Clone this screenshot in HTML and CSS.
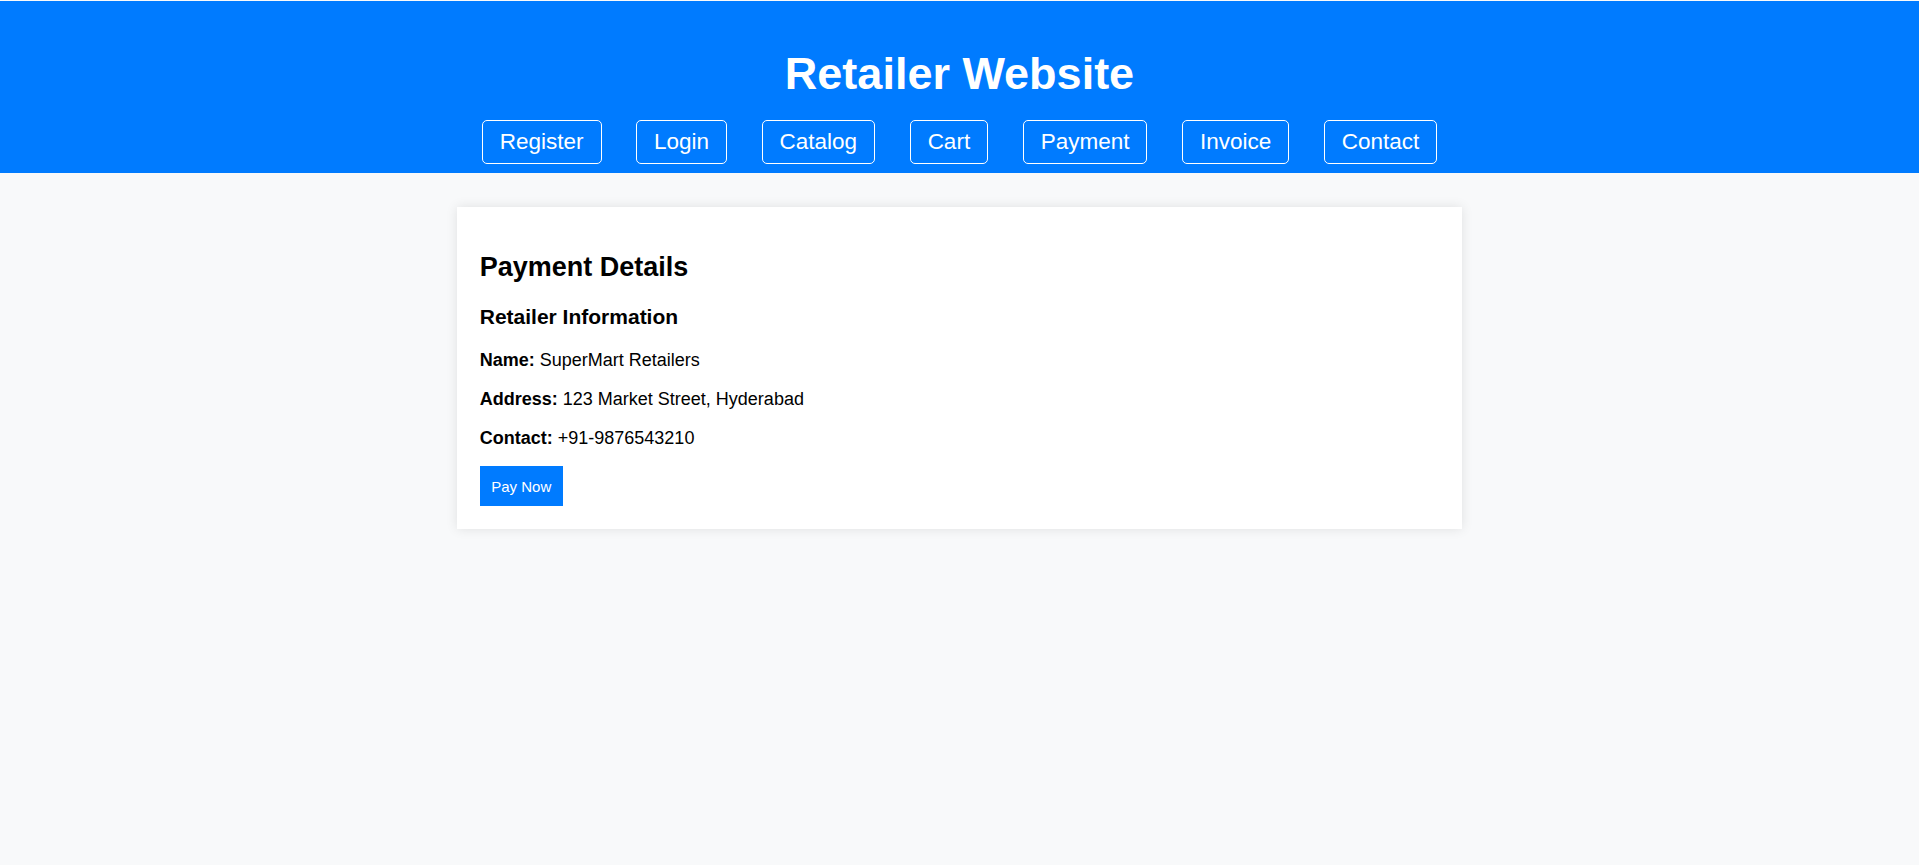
FILE: index.html
```html
<!DOCTYPE html>
<html lang="en">
<head>
<meta charset="utf-8">
<title>Retailer Website - Payment</title>
<link rel="stylesheet" href="styles.css">
</head>
<body>
<header class="site-header">
  <h1 class="site-title">Retailer Website</h1>
  <nav class="site-nav">
    <a class="nav-link" href="#">Register</a>
    <a class="nav-link" href="#">Login</a>
    <a class="nav-link" href="#">Catalog</a>
    <a class="nav-link" href="#">Cart</a>
    <a class="nav-link" href="#">Payment</a>
    <a class="nav-link" href="#">Invoice</a>
    <a class="nav-link" href="#">Contact</a>
  </nav>
</header>
<main class="card">
  <h2 class="card-title">Payment Details</h2>
  <h3 class="card-subtitle">Retailer Information</h3>
  <p class="info"><strong>Name:</strong> SuperMart Retailers</p>
  <p class="info"><strong>Address:</strong> 123 Market Street, Hyderabad</p>
  <p class="info"><strong>Contact:</strong> +91-9876543210</p>
  <button class="pay-btn" type="button">Pay Now</button>
</main>
</body>
</html>
```

FILE: styles.css
```css
html, body {
  margin: 0;
  padding: 0;
}

body {
  background: #f8f9fa;
  font-family: "Liberation Sans", Arial, sans-serif;
  font-size: 18px;
  color: #000;
}

.site-header {
  margin-top: 1px;
  background: #007bff;
  color: #fff;
  text-align: center;
  padding: 17px 0 9px;
}

.site-title {
  margin: 30px 0 20px;
  font-size: 45px;
  font-weight: bold;
  line-height: 52px;
}

.site-nav {
  display: flex;
  justify-content: center;
  gap: 34.5px;
}

.nav-link {
  display: block;
  color: #fff;
  text-decoration: none;
  font-size: 22.5px;
  line-height: 26px;
  padding: 8px 17px;
  border: 1px solid #fff;
  border-radius: 5px;
}

.card {
  display: block;
  width: 50%;
  margin: 34px auto;
  padding: 22.5px;
  background: #fff;
  box-shadow: 0 0 11px rgba(0, 0, 0, 0.1);
}

.card-title {
  font-size: 27px;
  margin: 22.4px 0;
  line-height: 31px;
}

.card-subtitle {
  font-size: 21px;
  margin: 21px 0;
  line-height: 24px;
}

.info {
  margin: 18px 0;
  line-height: 20.7px;
}

.pay-btn {
  display: block;
  background: #007bff;
  color: #fff;
  border: none;
  font-family: "Liberation Sans", Arial, sans-serif;
  font-size: 15px;
  line-height: 17px;
  padding: 11.5px 11.5px;
  margin: 0;
  cursor: pointer;
}
```
